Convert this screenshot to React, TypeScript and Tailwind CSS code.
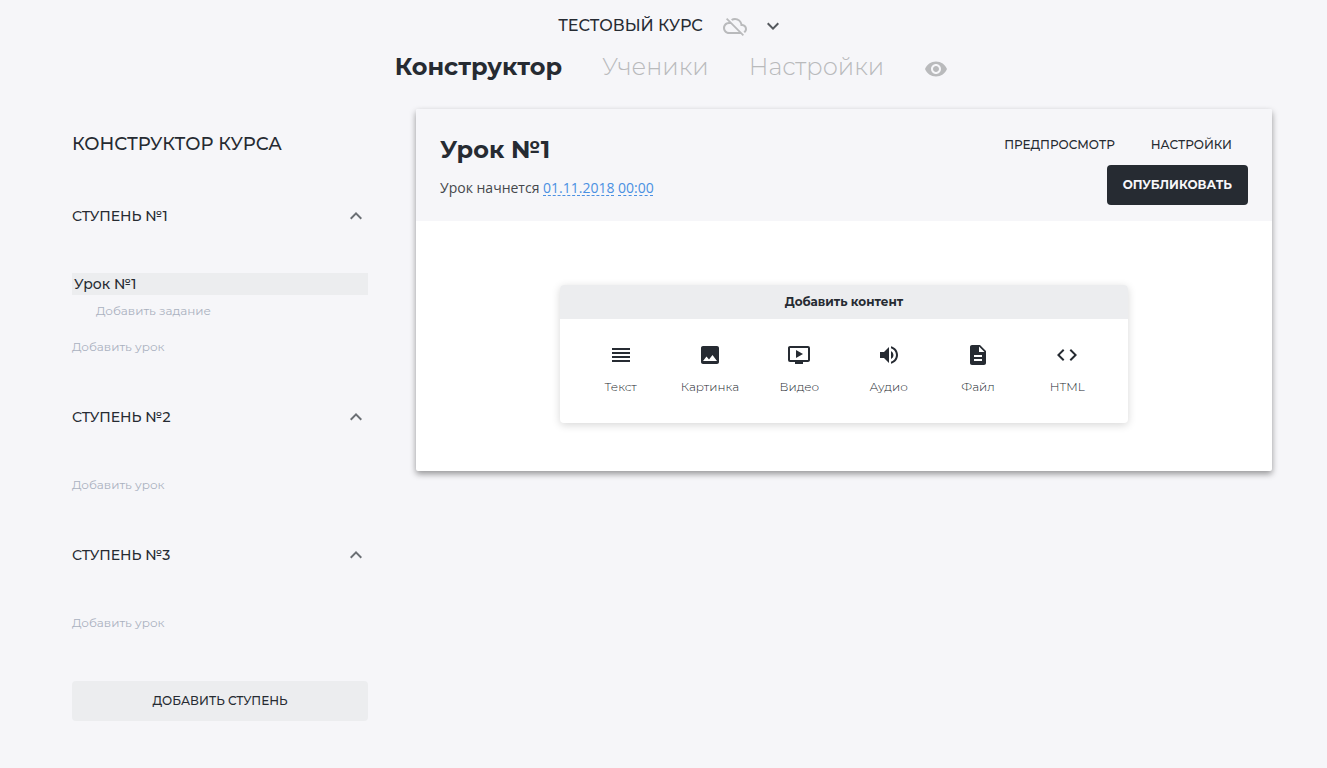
import { useState } from "react";
import type { IconType } from "react-icons";
import {
  MdCloudOff,
  MdCode,
  MdDescription,
  MdExpandLess,
  MdExpandMore,
  MdImage,
  MdOndemandVideo,
  MdReorder,
  MdVisibility,
  MdVolumeUp,
} from "react-icons/md";

type Stage = { title: string; lessons: string[] };

const STAGES: Stage[] = [
  { title: "СТУПЕНЬ №1", lessons: ["Урок №1"] },
  { title: "СТУПЕНЬ №2", lessons: [] },
  { title: "СТУПЕНЬ №3", lessons: [] },
];

const CONTENT_TYPES: { label: string; Icon: IconType }[] = [
  { label: "Текст", Icon: MdReorder },
  { label: "Картинка", Icon: MdImage },
  { label: "Видео", Icon: MdOndemandVideo },
  { label: "Аудио", Icon: MdVolumeUp },
  { label: "Файл", Icon: MdDescription },
  { label: "HTML", Icon: MdCode },
];

function Header() {
  return (
    <header className="flex flex-col items-center pt-2 pl-4">
      <div className="flex h-9 items-center">
        <h1 className="text-[16px] font-medium">ТЕСТОВЫЙ КУРС</h1>
        <MdCloudOff className="ml-5 size-6 text-[#b9babc]" aria-hidden="true" />
        <button type="button" aria-label="Меню курса" className="ml-3.5 text-[#55595e]">
          <MdExpandMore className="size-6" />
        </button>
      </div>
      <nav className="flex h-[46px] items-center gap-10 text-[24px] font-light text-[#b9babc]">
        <a href="#constructor" className="font-bold text-[#262b32]">Конструктор</a>
        <a href="#students">Ученики</a>
        <a href="#settings">Настройки</a>
        <a href="#preview" aria-label="Просмотр" className="pt-1">
          <MdVisibility className="size-6" />
        </a>
      </nav>
    </header>
  );
}

function StageSection({ stage }: { stage: Stage }) {
  const [open, setOpen] = useState(true);
  const Chevron = open ? MdExpandLess : MdExpandMore;
  return (
    <section className="mb-[47px]">
      <h3>
        <button
          type="button"
          aria-expanded={open}
          onClick={() => setOpen(!open)}
          className="flex h-6 w-full items-center justify-between text-[14px] font-medium"
        >
          {stage.title}
          <Chevron className="size-6 text-[#6b6f74]" />
        </button>
      </h3>
      {open && (
        <div className="mt-[45px] flex flex-col items-start text-[12px] leading-[22px] text-[#aab1bf]">
          {stage.lessons.map((lesson) => (
            <div key={lesson} className="mb-3.5 w-full">
              <a href="#lesson" className="block bg-[#ecedef] px-0.5 text-[14px] font-medium text-[#262b32]">
                {lesson}
              </a>
              <button type="button" className="mt-[5px] ml-6 block">Добавить задание</button>
            </div>
          ))}
          <button type="button">Добавить урок</button>
        </div>
      )}
    </section>
  );
}

function Sidebar() {
  return (
    <aside className="w-[296px] shrink-0 pt-[23px]">
      <h2 className="mb-12 text-[18px] leading-6 font-medium">КОНСТРУКТОР КУРСА</h2>
      {STAGES.map((stage) => (
        <StageSection key={stage.title} stage={stage} />
      ))}
      <button type="button" className="h-10 w-full rounded bg-[#ecedef] text-[12px] font-medium">
        ДОБАВИТЬ СТУПЕНЬ
      </button>
    </aside>
  );
}

function ContentPicker() {
  return (
    <section className="mx-auto w-full max-w-[568px] overflow-hidden rounded bg-white shadow-[0_2px_8px_rgba(0,0,0,0.16)]">
      <h3 className="bg-[#ecedef] text-center text-[12px] leading-[34px] font-bold">Добавить контент</h3>
      <div className="grid grid-cols-6 px-4 pt-6 pb-[27px]">
        {CONTENT_TYPES.map(({ label, Icon }) => (
          <button key={label} type="button" className="flex flex-col items-center gap-[11px] text-[12px] leading-[18px] font-light">
            <Icon className="size-6" />
            {label}
          </button>
        ))}
      </div>
    </section>
  );
}

const DATE_LINK =
  "text-[#4a90e2] underline decoration-dashed decoration-1 underline-offset-2";

function LessonCard() {
  return (
    <main className="min-w-0 flex-1 overflow-hidden rounded-xs bg-white shadow-[0_3px_6px_rgba(0,0,0,0.4)]">
      <div className="flex h-28 justify-between bg-[#f6f6f9] px-6 pt-4">
        <div className="pt-[9px]">
          <h2 className="text-[24px] leading-8 font-bold">Урок №1</h2>
          <p className="mt-[11px] font-['Open_Sans',sans-serif] text-[14px] leading-[22px] text-[#45484c]">
            Урок начнется{" "}
            <a href="#date" className={DATE_LINK}>01.11.2018</a>{" "}
            <a href="#time" className={DATE_LINK}>00:00</a>
          </p>
        </div>
        <div className="flex flex-col items-end text-[12px] font-medium">
          <div className="flex gap-1">
            <button type="button" className="h-10 px-4">ПРЕДПРОСМОТР</button>
            <button type="button" className="h-10 px-4">НАСТРОЙКИ</button>
          </div>
          <button type="button" className="h-10 rounded bg-[#262b32] px-4 font-bold text-[#f6f6f9]">
            ОПУБЛИКОВАТЬ
          </button>
        </div>
      </div>
      <div className="px-6 pt-16 pb-12">
        <ContentPicker />
      </div>
    </main>
  );
}

export default function App() {
  return (
    <div className="min-h-screen bg-[#f6f6f9] font-[Montserrat,Inter,sans-serif] text-[#262b32]">
      <Header />
      <div className="mx-auto flex max-w-[1217px] items-start gap-12 pt-[19px] pl-[17px]">
        <Sidebar />
        <LessonCard />
      </div>
    </div>
  );
}
